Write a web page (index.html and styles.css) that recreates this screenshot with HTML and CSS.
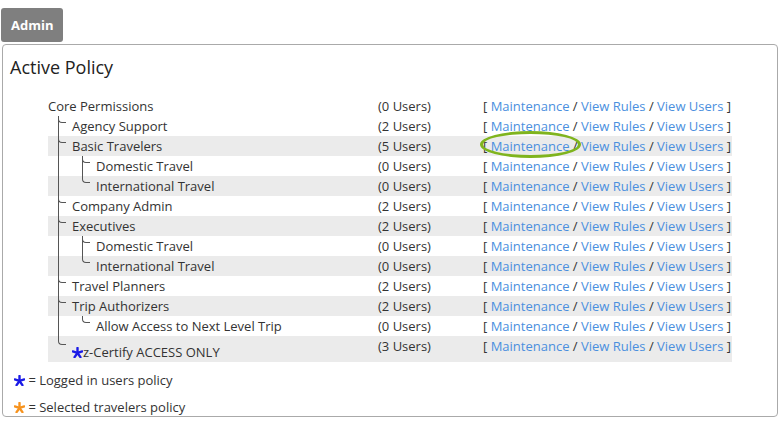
FILE: index.html
```html
<!DOCTYPE html>
<html lang="en">

<head>
    <meta charset="UTF-8">
    <meta name="viewport" content="width=device-width, initial-scale=1.0">
    <title>Active Policy</title>
    <link rel="stylesheet" href="styles.css">
</head>

<body>
    <!-- tab -->
    <div class="tab">Admin</div>

    <div class="panel">
        <h2 class="panel-title">Active Policy</h2>

        <table class="policy-table">
            <tr>
                <td class="name"><div class="tree"><span class="label">Core Permissions</span></div></td>
                <td class="count">(0 Users)</td>
                <td class="links">[ <a href="#">Maintenance</a> / <a href="#">View Rules</a> / <a href="#">View Users</a> ]</td>
            </tr>
            <tr>
                <td class="name"><div class="tree"><span class="guide tee"></span><span class="label">Agency Support</span></div></td>
                <td class="count">(2 Users)</td>
                <td class="links">[ <a href="#">Maintenance</a> / <a href="#">View Rules</a> / <a href="#">View Users</a> ]</td>
            </tr>
            <tr class="shaded">
                <td class="name"><div class="tree"><span class="guide tee"></span><span class="label">Basic Travelers</span></div></td>
                <td class="count">(5 Users)</td>
                <td class="links"><span class="circled"></span>[ <a href="#">Maintenance</a> / <a href="#">View Rules</a> / <a href="#">View Users</a> ]</td>
            </tr>
            <tr>
                <td class="name"><div class="tree"><span class="guide pipe"></span><span class="guide tee"></span><span class="label">Domestic Travel</span></div></td>
                <td class="count">(0 Users)</td>
                <td class="links">[ <a href="#">Maintenance</a> / <a href="#">View Rules</a> / <a href="#">View Users</a> ]</td>
            </tr>
            <tr class="shaded">
                <td class="name"><div class="tree"><span class="guide pipe"></span><span class="guide end"></span><span class="label">International Travel</span></div></td>
                <td class="count">(0 Users)</td>
                <td class="links">[ <a href="#">Maintenance</a> / <a href="#">View Rules</a> / <a href="#">View Users</a> ]</td>
            </tr>
            <tr>
                <td class="name"><div class="tree"><span class="guide tee"></span><span class="label">Company Admin</span></div></td>
                <td class="count">(2 Users)</td>
                <td class="links">[ <a href="#">Maintenance</a> / <a href="#">View Rules</a> / <a href="#">View Users</a> ]</td>
            </tr>
            <tr class="shaded">
                <td class="name"><div class="tree"><span class="guide tee"></span><span class="label">Executives</span></div></td>
                <td class="count">(2 Users)</td>
                <td class="links">[ <a href="#">Maintenance</a> / <a href="#">View Rules</a> / <a href="#">View Users</a> ]</td>
            </tr>
            <tr>
                <td class="name"><div class="tree"><span class="guide pipe"></span><span class="guide tee"></span><span class="label">Domestic Travel</span></div></td>
                <td class="count">(0 Users)</td>
                <td class="links">[ <a href="#">Maintenance</a> / <a href="#">View Rules</a> / <a href="#">View Users</a> ]</td>
            </tr>
            <tr class="shaded">
                <td class="name"><div class="tree"><span class="guide pipe"></span><span class="guide end"></span><span class="label">International Travel</span></div></td>
                <td class="count">(0 Users)</td>
                <td class="links">[ <a href="#">Maintenance</a> / <a href="#">View Rules</a> / <a href="#">View Users</a> ]</td>
            </tr>
            <tr>
                <td class="name"><div class="tree"><span class="guide tee"></span><span class="label">Travel Planners</span></div></td>
                <td class="count">(2 Users)</td>
                <td class="links">[ <a href="#">Maintenance</a> / <a href="#">View Rules</a> / <a href="#">View Users</a> ]</td>
            </tr>
            <tr class="shaded">
                <td class="name"><div class="tree"><span class="guide tee"></span><span class="label">Trip Authorizers</span></div></td>
                <td class="count">(2 Users)</td>
                <td class="links">[ <a href="#">Maintenance</a> / <a href="#">View Rules</a> / <a href="#">View Users</a> ]</td>
            </tr>
            <tr>
                <td class="name"><div class="tree"><span class="guide pipe"></span><span class="guide end"></span><span class="label">Allow Access to Next Level Trip</span></div></td>
                <td class="count">(0 Users)</td>
                <td class="links">[ <a href="#">Maintenance</a> / <a href="#">View Rules</a> / <a href="#">View Users</a> ]</td>
            </tr>
            <tr class="shaded tall">
                <td class="name"><div class="tree"><span class="guide end"></span><span class="label"><svg class="star" viewBox="0 0 12 12"><g stroke="#1a1ae6" stroke-width="2.6" stroke-linecap="round"><line x1="6" y1="6.5" x2="6" y2="1"/><line x1="6" y1="6.5" x2="11.2" y2="4.8"/><line x1="6" y1="6.5" x2="9.2" y2="11"/><line x1="6" y1="6.5" x2="2.8" y2="11"/><line x1="6" y1="6.5" x2="0.8" y2="4.8"/></g></svg>z-Certify ACCESS ONLY</span></div></td>
                <td class="count">(3 Users)</td>
                <td class="links">[ <a href="#">Maintenance</a> / <a href="#">View Rules</a> / <a href="#">View Users</a> ]</td>
            </tr>
        </table>

        <!-- legend -->
        <div class="legend">
            <div class="legend-item"><svg class="star" viewBox="0 0 12 12"><g stroke="#1a1ae6" stroke-width="2.6" stroke-linecap="round"><line x1="6" y1="6.5" x2="6" y2="1"/><line x1="6" y1="6.5" x2="11.2" y2="4.8"/><line x1="6" y1="6.5" x2="9.2" y2="11"/><line x1="6" y1="6.5" x2="2.8" y2="11"/><line x1="6" y1="6.5" x2="0.8" y2="4.8"/></g></svg> = Logged in users policy</div>
            <div class="legend-item"><svg class="star" viewBox="0 0 12 12"><g stroke="#f7931e" stroke-width="2.6" stroke-linecap="round"><line x1="6" y1="6.5" x2="6" y2="1"/><line x1="6" y1="6.5" x2="11.2" y2="4.8"/><line x1="6" y1="6.5" x2="9.2" y2="11"/><line x1="6" y1="6.5" x2="2.8" y2="11"/><line x1="6" y1="6.5" x2="0.8" y2="4.8"/></g></svg> = Selected travelers policy</div>
        </div>
    </div>
</body>

</html>
```

FILE: styles.css
```css
body {
    font-family: "Open Sans", "Liberation Sans", sans-serif;
    font-size: 13px;
    color: #333;
    margin: 0;
    padding: 8px 4px 0 2px;
    background-color: #fff;
}

/* tab */
.tab {
    width: fit-content;
    margin-left: -1px;
    padding: 0 10px;
    height: 34px;
    line-height: 34px;
    background-color: #7f7f7f;
    color: #fff;
    font-weight: bold;
    font-size: 13px;
    border-radius: 3px;
}

.panel {
    margin-top: 2px;
    border: 1px solid #aaa;
    border-radius: 4px;
    box-sizing: border-box;
    height: 373px;
}

.panel-title {
    margin: 10px 0 0 7px;
    font-size: 18px;
    line-height: 24px;
    font-weight: normal;
    color: #222;
}

.policy-table {
    margin: 17px 0 0 45px;
    border-collapse: collapse;
    width: 684px;
}

.policy-table td {
    padding: 0;
    vertical-align: top;
    line-height: 20px;
    height: 20px;
    white-space: nowrap;
}

.policy-table .shaded td {
    background-color: #ebebeb;
}

.policy-table .name {
    width: 330px;
}

.policy-table .count {
    width: 105px;
}

.policy-table .links {
    position: relative;
}

.links a {
    color: #4a8fde;
    text-decoration: none;
}

.tree {
    display: flex;
}

.label {
    line-height: 20px;
}

.guide {
    flex: none;
    width: 24px;
    position: relative;
}

.guide.pipe::before,
.guide.tee::before {
    content: "";
    position: absolute;
    left: 10px;
    top: 0;
    bottom: 0;
    border-left: 1px solid #555;
}

.guide.tee::after,
.guide.end::after {
    content: "";
    position: absolute;
    left: 10px;
    top: 0;
    width: 7px;
    height: 6px;
    border-left: 1px solid #555;
    border-bottom: 1px solid #555;
    border-bottom-left-radius: 4px;
}

/* last row is taller */
.policy-table .tall td {
    height: 26px;
}

.tall .label {
    padding-top: 6px;
}

.tall .guide.end::after {
    height: 8px;
}

.star {
    width: 11px;
    height: 11px;
    vertical-align: -1px;
}

/* green highlight round Maintenance */
.circled {
    position: absolute;
    left: -3px;
    top: -5px;
    width: 95px;
    height: 21px;
    border: 3px solid #7fb41e;
    border-radius: 50%;
}

.legend {
    margin-top: 9px;
    padding-left: 11px;
}

.legend-item {
    line-height: 18px;
    margin-bottom: 9px;
}
```
